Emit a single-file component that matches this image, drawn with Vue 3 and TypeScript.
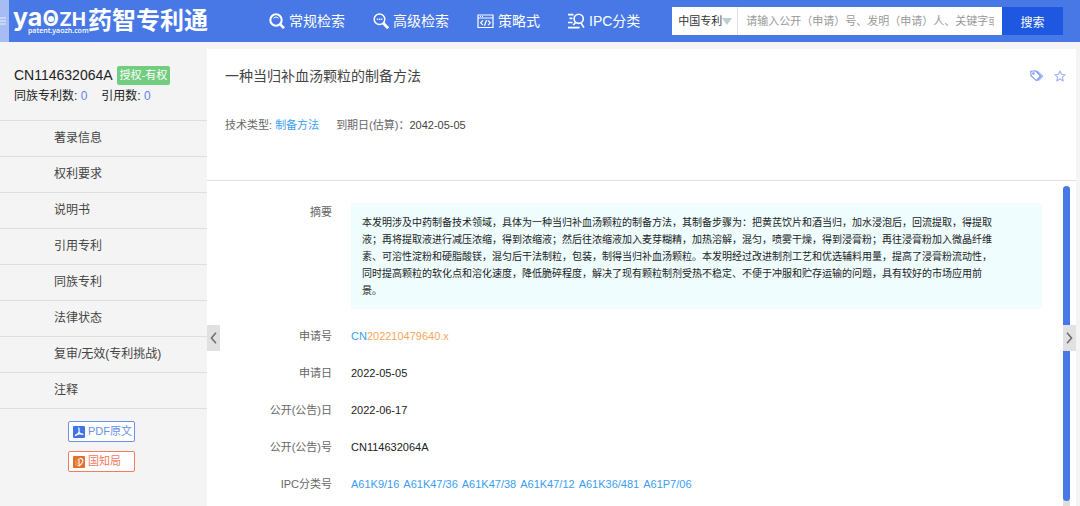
<script setup lang="ts">
import { ref } from 'vue'

const scope = ref<string>('中国专利')
const query = ref<string>('')

const sections: string[] = [
  '著录信息',
  '权利要求',
  '说明书',
  '引用专利',
  '同族专利',
  '法律状态',
  '复审/无效(专利挑战)',
  '注释',
]

const abstractLines: string[] = [
  '本发明涉及中药制备技术领域，具体为一种当归补血汤颗粒的制备方法，其制备步骤为：把黄芪饮片和酒当归，加水浸泡后，回流提取，得提取',
  '液；再将提取液进行减压浓缩，得到浓缩液；然后往浓缩液加入麦芽糊精，加热溶解，混匀，喷雾干燥，得到浸膏粉；再往浸膏粉加入微晶纤维',
  '素、可溶性淀粉和硬脂酸镁，混匀后干法制粒，包装，制得当归补血汤颗粒。本发明经过改进制剂工艺和优选辅料用量，提高了浸膏粉流动性，',
  '同时提高颗粒的软化点和溶化速度，降低脆碎程度，解决了现有颗粒制剂受热不稳定、不便于冲服和贮存运输的问题，具有较好的市场应用前',
  '景。',
]

const ipcCodes: string[] = ['A61K9/16', 'A61K47/36', 'A61K47/38', 'A61K47/12', 'A61K36/481', 'A61P7/06']
</script>

<template>
  <div class="page">
    <header class="topbar">
      <button class="drawer" type="button" aria-label="菜单">
        <svg width="7" height="8" viewBox="0 0 7 8"><path d="M0 1h6M0 4h6M0 7h6" stroke="#e9effd" stroke-width="1" /></svg>
      </button>
      <a class="logo" href="#">
        <span class="brand">
          <span class="word"><span class="low">ya<span class="ring">o</span></span>ZH</span>
          <span class="domain">patent.yaozh.com</span>
        </span>
        <span class="product">药智专利通</span>
      </a>

      <nav class="nav">
        <a href="#">
          <svg width="16" height="16" viewBox="0 0 16 16" fill="none" stroke="#fff">
            <circle cx="7" cy="7" r="5.7" stroke-width="2.1" />
            <path d="M4.5 5.2Q7 2.6 9.5 5.2" stroke-width="1" />
            <path d="M11 11.2l4 4" stroke-width="2.6" />
          </svg>
          <span>常规检索</span>
        </a>
        <a href="#">
          <svg width="16" height="16" viewBox="0 0 16 16" fill="none" stroke="#fff">
            <circle cx="6.5" cy="6.3" r="5.3" stroke-width="1.5" />
            <path d="M3.8 6.3h1.4M6 6.3h1.4M8.2 6.3h1.2" stroke-width="1.6" />
            <path d="M10.3 10.3l4.8 4.9" stroke-width="2.8" />
          </svg>
          <span>高级检索</span>
        </a>
        <a href="#">
          <svg width="17" height="16" viewBox="0 0 17 16" fill="none" stroke="#fff" stroke-width="1.2">
            <path d="M1 2h15v12.5H1zM1 5h15M3 3.5h1M5 3.5h1" />
            <path d="M6 7.4L3.7 9.8 6 12.2M11 7.4l2.3 2.4-2.3 2.4M9.6 7L7.4 12.7" />
          </svg>
          <span>策略式</span>
        </a>
        <a href="#">
          <svg width="17" height="16" viewBox="0 0 17 16" fill="none" stroke="#fff" stroke-width="1.6">
            <path d="M0 1.6h5.5M1.5 5.4h3M0 9.5h4.6M0 14.6h11.5" />
            <circle cx="10.7" cy="5.8" r="4.6" />
            <path d="M7.7 9.4L5.2 12M13 9.8l2.9 4.9" />
          </svg>
          <span>IPC分类</span>
        </a>
      </nav>

      <form class="search" @submit.prevent>
        <div class="scope">
          <select v-model="scope" aria-label="专利范围">
            <option>中国专利</option>
          </select>
          <svg width="10" height="7" viewBox="0 0 10 7"><path d="M0 0h10L5 7z" fill="#b9ced5" /></svg>
        </div>
        <input v-model="query" type="text" aria-label="检索词" placeholder="请输入公开（申请）号、发明（申请）人、关键字或易错词" />
        <button type="submit">搜索</button>
      </form>
    </header>

    <div class="columns">
      <aside class="side">
        <div class="summary">
          <div class="number">CN114632064A <span class="badge">授权-有权</span></div>
          <div class="counts">
            <span>同族专利数: <a href="#">0</a></span>
            <span>引用数: <a href="#">0</a></span>
          </div>
        </div>
        <nav class="menu">
          <a v-for="name in sections" :key="name" href="#">{{ name }}</a>
        </nav>
        <div class="sources">
          <a class="pdf" href="#">
            <svg width="12" height="12" viewBox="0 0 12 12">
              <rect width="12" height="12" rx="1" fill="#3f73e6" />
              <path d="M5.7 1.5Q6.5 4.5 6 6.4 4.7 8.9 2 9.8M6 6.4Q7.5 8 10.4 8.3M2.3 9.2Q5.5 7.2 10.2 8.4" fill="none" stroke="#fff" stroke-width="1.2" />
            </svg>
            <span>PDF原文</span>
          </a>
          <a class="office" href="#">
            <svg width="12" height="12" viewBox="0 0 12 12">
              <rect width="12" height="12" rx="1" fill="#e4702c" />
              <path d="M6 2.2v8.2M7 2.4q3.2.2 2.8 3Q9.3 7.3 6.6 9.7" fill="none" stroke="#fff" stroke-width="1.1" />
              <path d="M4.2 3.5v1M2.8 5.3v1M4.2 6.5v1M2.5 8.3h1M4 9.5h1" stroke="#fbd9c3" stroke-width="1" />
            </svg>
            <span>国知局</span>
          </a>
        </div>
      </aside>

      <main class="main">
        <section class="heading">
          <div class="title-row">
            <h1>一种当归补血汤颗粒的制备方法</h1>
            <div class="actions">
              <button type="button" aria-label="标签">
                <svg width="14" height="12" viewBox="0 0 14 12" fill="none" stroke="#7898ec" stroke-width="1.1">
                  <path d="M.8 1.2l4.8-.4 4.9 5.4-4 4.4L1 5.7z" />
                  <circle cx="3.4" cy="3.4" r=".7" />
                  <path d="M7.2.9l5.8 5.3-4.4 4.6M6.5.9l5 5.3-4.1 4.4" stroke-width=".9" />
                </svg>
              </button>
              <button type="button" aria-label="收藏">
                <svg width="12" height="12" viewBox="0 0 12 12" fill="none" stroke="#9db4f1" stroke-width="1.1" stroke-linejoin="round">
                  <path d="M6 1l1.5 3.3 3.7.4-2.8 2.4.8 3.8L6 9.1l-3.2 1.8.8-3.8L.8 4.7l3.7-.4z" />
                </svg>
              </button>
            </div>
          </div>
          <div class="facts">
            <span>技术类型: <a href="#">制备方法</a></span>
            <span>到期日(估算)：<em>2042-05-05</em></span>
          </div>
        </section>

        <section class="detail">
          <dl class="fields">
            <dt>摘要</dt>
            <dd class="abstract">
              <template v-for="(line, i) in abstractLines" :key="i"><br v-if="i > 0" />{{ line }}</template>
            </dd>
            <dt>申请号</dt>
            <dd><a href="#">CN<span class="serial">202210479640.x</span></a></dd>
            <dt>申请日</dt>
            <dd>2022-05-05</dd>
            <dt>公开(公告)日</dt>
            <dd>2022-06-17</dd>
            <dt>公开(公告)号</dt>
            <dd>CN114632064A</dd>
            <dt>IPC分类号</dt>
            <dd class="codes"><a v-for="code in ipcCodes" :key="code" href="#">{{ code }}</a></dd>
          </dl>
          <div class="rail"><div class="thumb"></div></div>
        </section>

        <button class="fold fold-left" type="button" aria-label="收起左栏">
          <svg width="7" height="12" viewBox="0 0 7 12"><path d="M6 .8L1.4 6 6 11.2" fill="none" stroke="#6b6b6b" stroke-width="1.5" /></svg>
        </button>
        <button class="fold fold-right" type="button" aria-label="展开右栏">
          <svg width="7" height="12" viewBox="0 0 7 12"><path d="M1 .8L5.6 6 1 11.2" fill="none" stroke="#6b6b6b" stroke-width="1.5" /></svg>
        </button>
      </main>
    </div>
  </div>
</template>

<style>
body {
  margin: 0;
  background: #f4f4f4;
}
</style>

<style scoped>
.page {
  display: flex;
  flex-direction: column;
  min-height: 100vh;
  font-family: "Liberation Sans", "Noto Sans CJK SC", sans-serif;
  font-size: 11px;
  color: #222;
  background: #f4f4f4;
}
.page * {
  box-sizing: border-box;
}
a {
  color: #3a9df5;
  text-decoration: none;
}
button,
input,
select {
  margin: 0;
  padding: 0;
  border: 0;
  border-radius: 0;
  outline: 0;
  font-family: inherit;
}
svg {
  display: block;
  flex: none;
}

.topbar {
  display: flex;
  align-items: center;
  height: 42px;
  background: #4878e6;
}
.drawer {
  display: flex;
  align-items: center;
  align-self: stretch;
  width: 9px;
  background: #a6bcf3;
}
.logo {
  display: flex;
  align-items: center;
  width: 202px;
  margin-left: 4px;
  color: #fff;
  white-space: nowrap;
}
.brand {
  position: relative;
  width: 75px;
  height: 34px;
}
.word {
  display: block;
  font: 700 19px/24px Inter, sans-serif;
}
.low {
  font-size: 25px;
}
.ring {
  position: relative;
  font-size: 28px;
  font-weight: 500;
}
.ring::after {
  content: "";
  position: absolute;
  left: calc(50% - 3px);
  bottom: 11px;
  width: 6px;
  height: 6px;
  border-radius: 50%;
  background: #fff;
}
.domain {
  position: absolute;
  left: 15px;
  bottom: 3px;
  font: 600 7px/9px "Open Sans", sans-serif;
}
.product {
  font-size: 24px;
  font-weight: 700;
  line-height: 34px;
}
.nav {
  display: flex;
  flex: none;
  gap: 28px;
  margin-left: 54px;
}
.nav a {
  display: flex;
  align-items: center;
  gap: 4px;
  color: #fff;
  font-size: 14px;
  line-height: 20px;
  white-space: nowrap;
}
.search {
  display: flex;
  flex: 1;
  height: 28px;
  margin: 0 17px 0 32px;
}
.scope {
  position: relative;
  flex: none;
  width: 66px;
  border-right: 1px solid #e2e2e2;
  background: #fff;
}
.scope select {
  width: 100%;
  height: 100%;
  padding-left: 6px;
  appearance: none;
  background: transparent;
  color: #333;
  font-size: 11px;
}
.scope svg {
  position: absolute;
  right: 5px;
  top: 11px;
  pointer-events: none;
}
.search input {
  flex: 1;
  min-width: 0;
  padding: 0 8px;
  background: #fff;
  font-size: 11px;
}
.search input::placeholder {
  color: #999;
}
.search button {
  width: 61px;
  background: #1f58e0;
  color: #fff;
  font-size: 12px;
}

.columns {
  display: flex;
  flex: 1;
}
.side {
  flex: none;
  width: 207px;
}
.summary {
  height: 78px;
  padding: 23px 0 0 14px;
  color: #222;
  white-space: nowrap;
}
.number {
  display: flex;
  align-items: center;
  gap: 4px;
  font-size: 14px;
  line-height: 20px;
}
.badge {
  padding: 0 3px;
  border-radius: 2px;
  background: #72cd81;
  color: #fff;
  font-size: 11px;
  line-height: 19px;
}
.counts {
  display: flex;
  gap: 14px;
  font-size: 12px;
  line-height: 22px;
}
.counts a {
  color: #5d86ea;
}
.menu {
  border-top: 1px solid #dedede;
}
.menu a {
  display: block;
  height: 36px;
  padding-left: 54px;
  border-bottom: 1px solid #dedede;
  color: #444;
  font-size: 12px;
  line-height: 34px;
}
.sources {
  display: flex;
  flex-direction: column;
  gap: 9px;
  width: 67px;
  margin: 12px 0 0 68px;
}
.sources a {
  display: flex;
  align-items: center;
  gap: 3px;
  height: 21px;
  padding-left: 4px;
  border: 1px solid currentColor;
  border-radius: 2px;
  background: #fff;
  line-height: 17px;
  white-space: nowrap;
}
.sources .pdf {
  color: #6b91ec;
}
.sources .office {
  color: #f27c62;
}

.main {
  position: relative;
  display: flex;
  flex: 1;
  flex-direction: column;
  min-width: 0;
  margin: 7px 4px 0 0;
  background: #fff;
}
.heading {
  height: 132px;
  padding: 16px 10px 0 18px;
  border-bottom: 1px solid #dfdfdf;
}
.title-row {
  display: flex;
  align-items: center;
  justify-content: space-between;
}
h1 {
  margin: 0;
  color: #444;
  font-size: 14px;
  font-weight: 400;
  line-height: 22px;
}
.actions {
  display: flex;
  gap: 10px;
}
.actions button {
  background: transparent;
}
.facts {
  display: flex;
  gap: 17px;
  margin-top: 28px;
  color: #666;
  line-height: 20px;
}
.facts em {
  color: #444;
  font-style: normal;
}
.detail {
  display: flex;
  flex: 1;
}
.fields {
  display: grid;
  flex: 1;
  grid-template-columns: 125px 1fr;
  align-content: start;
  column-gap: 19px;
  row-gap: 18px;
  margin: 0;
  padding: 22px 21px 0 0;
  line-height: 19px;
}
dt {
  color: #666;
  text-align: right;
}
dd {
  margin: 0;
}
.abstract {
  padding: 11px 11px 10px;
  background: #effdff;
  font-size: 10px;
  line-height: 17px;
}
.serial {
  color: #f7a75c;
}
.codes {
  display: flex;
  flex-wrap: wrap;
  gap: 4px;
}
.rail {
  flex: none;
  width: 7px;
  margin: 5px 6px 0 0;
  padding-bottom: 5px;
  background: #dedede;
  border-radius: 4px 4px 0 0;
}
.thumb {
  height: 100%;
  border-radius: 4px;
  background: #4878e6;
}
.fold {
  position: absolute;
  top: 276px;
  display: flex;
  align-items: center;
  justify-content: center;
  width: 13px;
  height: 26px;
  background: #e1e1e1;
}
.fold-left {
  left: 0;
}
.fold-right {
  right: 0;
}
</style>
